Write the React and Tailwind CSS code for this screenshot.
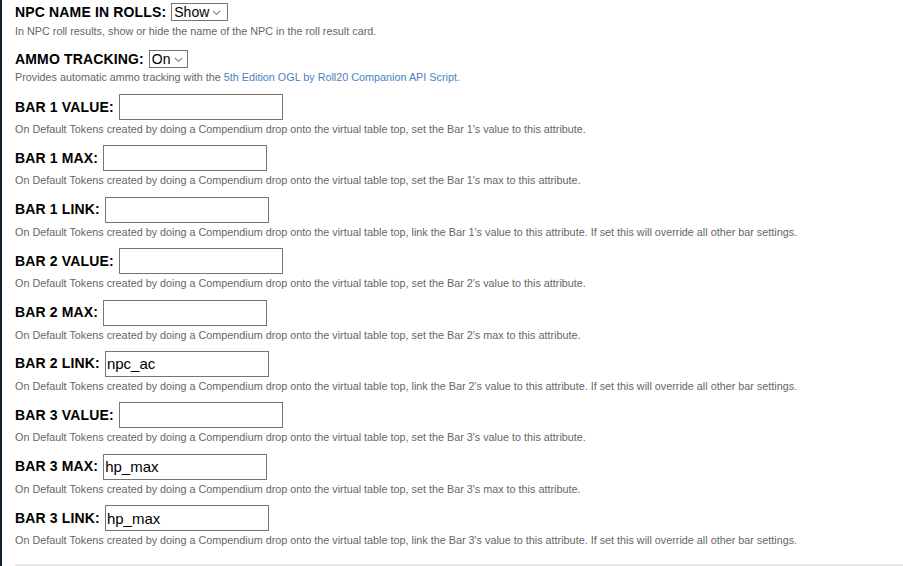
import React from "react";

const BARS = [
  { label: "BAR 1 VALUE:", value: "", desc: "On Default Tokens created by doing a Compendium drop onto the virtual table top, set the Bar 1's value to this attribute." },
  { label: "BAR 1 MAX:", value: "", desc: "On Default Tokens created by doing a Compendium drop onto the virtual table top, set the Bar 1's max to this attribute." },
  { label: "BAR 1 LINK:", value: "", desc: "On Default Tokens created by doing a Compendium drop onto the virtual table top, link the Bar 1's value to this attribute. If set this will override all other bar settings." },
  { label: "BAR 2 VALUE:", value: "", desc: "On Default Tokens created by doing a Compendium drop onto the virtual table top, set the Bar 2's value to this attribute." },
  { label: "BAR 2 MAX:", value: "", desc: "On Default Tokens created by doing a Compendium drop onto the virtual table top, set the Bar 2's max to this attribute." },
  { label: "BAR 2 LINK:", value: "npc_ac", desc: "On Default Tokens created by doing a Compendium drop onto the virtual table top, link the Bar 2's value to this attribute. If set this will override all other bar settings." },
  { label: "BAR 3 VALUE:", value: "", desc: "On Default Tokens created by doing a Compendium drop onto the virtual table top, set the Bar 3's value to this attribute." },
  { label: "BAR 3 MAX:", value: "hp_max", desc: "On Default Tokens created by doing a Compendium drop onto the virtual table top, set the Bar 3's max to this attribute." },
  { label: "BAR 3 LINK:", value: "hp_max", desc: "On Default Tokens created by doing a Compendium drop onto the virtual table top, link the Bar 3's value to this attribute. If set this will override all other bar settings." },
];

function Chevron() {
  return (
    <svg width="9" height="6" viewBox="0 0 9 6" className="ml-[3px] mt-[1px]">
      <path d="M1 1l3.5 3.5L8 1" fill="none" stroke="#8a8a8a" strokeWidth="1.1" />
    </svg>
  );
}

function FakeSelect({ value, width }) {
  return (
    <span
      className={`inline-flex h-[18px] items-center border border-[#767676] bg-white pl-[2px] text-[14px] text-black ${width}`}
    >
      {value}
      <Chevron />
    </span>
  );
}

export default function App() {
  return (
    <div className="min-h-[566px] w-[903px] border-l-2 border-[#13202f] bg-white pl-[13px] font-['Liberation_Sans',Arial,sans-serif]">
      <div className="pt-[3px]">
        <div className="flex h-[18px] items-center gap-[5px]">
          <span className="text-[14px] font-bold tracking-[0.15px] text-black">NPC NAME IN ROLLS:</span>
          <FakeSelect value="Show" width="w-[57px]" />
        </div>
        <p className="mt-[3px] text-[10.8px] leading-[14px] text-[#666]">
          In NPC roll results, show or hide the name of the NPC in the roll result card.
        </p>
      </div>

      <div className="mt-[12px]">
        <div className="flex h-[18px] items-center gap-[5px]">
          <span className="text-[14px] font-bold tracking-[0.15px] text-black">AMMO TRACKING:</span>
          <FakeSelect value="On" width="w-[39px]" />
        </div>
        <p className="mt-[2px] text-[10.8px] leading-[14px] text-[#666]">
          Provides automatic ammo tracking with the{" "}
          <span className="text-[#4a82c4]">5th Edition OGL by Roll20 Companion API Script.</span>
        </p>
      </div>

      <div className="mt-[10px]">
        {BARS.map((bar) => (
          <div key={bar.label} className="mb-[9.375px]">
            <div className="flex h-[26px] items-center gap-[5px]">
              <span className="text-[14px] font-bold tracking-[0.15px] text-black">{bar.label}</span>
              <input
                readOnly
                value={bar.value}
                className="h-[26px] w-[164px] border border-[#767676] bg-white px-[1px] text-[15px] text-black outline-none"
              />
            </div>
            <p className="mt-[2px] text-[10.8px] leading-[14px] text-[#666]">{bar.desc}</p>
          </div>
        ))}
      </div>

      <div className="mt-[17px] border-t-2 border-[#e8e8e8]" />
    </div>
  );
}
